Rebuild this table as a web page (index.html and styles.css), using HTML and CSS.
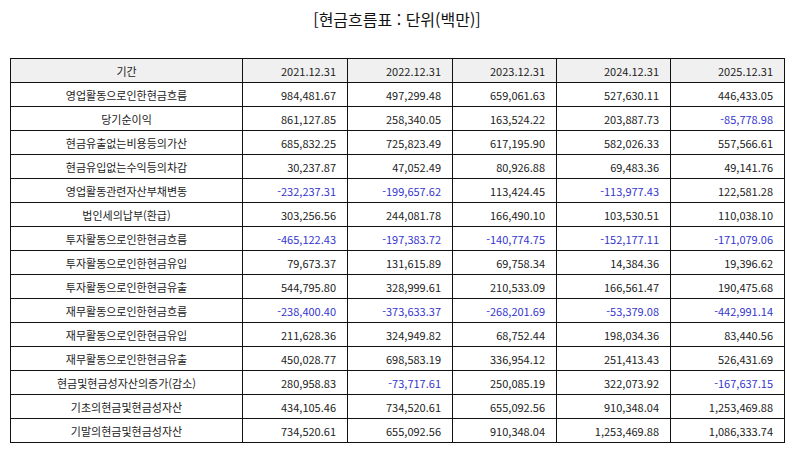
FILE: index.html
```html
<!DOCTYPE html>
<html lang="ko">
<head>
<meta charset="utf-8">
<link rel="stylesheet" href="styles.css">
</head>
<body>
<div class="page">
  <h1 class="title">[현금흐름표 : 단위(백만)]</h1>
  <table class="cf">
    <colgroup>
      <col class="c-label"><col class="c-a"><col class="c-a"><col class="c-b"><col class="c-c"><col class="c-c">
    </colgroup>
    <thead>
      <tr><th class="lbl">기간</th><th>2021.12.31</th><th>2022.12.31</th><th>2023.12.31</th><th>2024.12.31</th><th>2025.12.31</th></tr>
    </thead>
    <tbody>
      <tr><td class="lbl">영업활동으로인한현금흐름</td><td>984,481.67</td><td>497,299.48</td><td>659,061.63</td><td>527,630.11</td><td>446,433.05</td></tr>
      <tr><td class="lbl">당기순이익</td><td>861,127.85</td><td>258,340.05</td><td>163,524.22</td><td>203,887.73</td><td class="neg">-85,778.98</td></tr>
      <tr><td class="lbl">현금유출없는비용등의가산</td><td>685,832.25</td><td>725,823.49</td><td>617,195.90</td><td>582,026.33</td><td>557,566.61</td></tr>
      <tr><td class="lbl">현금유입없는수익등의차감</td><td>30,237.87</td><td>47,052.49</td><td>80,926.88</td><td>69,483.36</td><td>49,141.76</td></tr>
      <tr><td class="lbl">영업활동관련자산부채변동</td><td class="neg">-232,237.31</td><td class="neg">-199,657.62</td><td>113,424.45</td><td class="neg">-113,977.43</td><td>122,581.28</td></tr>
      <tr><td class="lbl">법인세의납부(환급)</td><td>303,256.56</td><td>244,081.78</td><td>166,490.10</td><td>103,530.51</td><td>110,038.10</td></tr>
      <tr><td class="lbl">투자활동으로인한현금흐름</td><td class="neg">-465,122.43</td><td class="neg">-197,383.72</td><td class="neg">-140,774.75</td><td class="neg">-152,177.11</td><td class="neg">-171,079.06</td></tr>
      <tr><td class="lbl">투자활동으로인한현금유입</td><td>79,673.37</td><td>131,615.89</td><td>69,758.34</td><td>14,384.36</td><td>19,396.62</td></tr>
      <tr><td class="lbl">투자활동으로인한현금유출</td><td>544,795.80</td><td>328,999.61</td><td>210,533.09</td><td>166,561.47</td><td>190,475.68</td></tr>
      <tr><td class="lbl">재무활동으로인한현금흐름</td><td class="neg">-238,400.40</td><td class="neg">-373,633.37</td><td class="neg">-268,201.69</td><td class="neg">-53,379.08</td><td class="neg">-442,991.14</td></tr>
      <tr><td class="lbl">재무활동으로인한현금유입</td><td>211,628.36</td><td>324,949.82</td><td>68,752.44</td><td>198,034.36</td><td>83,440.56</td></tr>
      <tr><td class="lbl">재무활동으로인한현금유출</td><td>450,028.77</td><td>698,583.19</td><td>336,954.12</td><td>251,413.43</td><td>526,431.69</td></tr>
      <tr><td class="lbl">현금및현금성자산의증가(감소)</td><td>280,958.83</td><td class="neg">-73,717.61</td><td>250,085.19</td><td>322,073.92</td><td class="neg">-167,637.15</td></tr>
      <tr><td class="lbl">기초의현금및현금성자산</td><td>434,105.46</td><td>734,520.61</td><td>655,092.56</td><td>910,348.04</td><td>1,253,469.88</td></tr>
      <tr><td class="lbl">기말의현금및현금성자산</td><td>734,520.61</td><td>655,092.56</td><td>910,348.04</td><td>1,253,469.88</td><td>1,086,333.74</td></tr>
    </tbody>
  </table>
</div>
</body>
</html>
```
FILE: styles.css
```css
html, body {
  margin: 0;
  padding: 0;
  background: #ffffff;
}
.page {
  padding: 9px 10px 0 10px;
  font-family: "Noto Sans CJK KR", "Noto Sans", sans-serif;
  color: #222222;
}
.title {
  margin: 0 0 29px 0;
  font-size: 16px;
  line-height: 20px;
  font-weight: normal;
  text-align: center;
  color: #111111;
}
.cf {
  width: 774px;
  border-collapse: collapse;
  table-layout: fixed;
  font-size: 11px;
}
.c-label { width: 232px; }
.c-a { width: 105px; }
.c-b { width: 104px; }
.c-c { width: 114px; }
.cf th, .cf td {
  border: 1px solid #111111;
  height: 23px;
  padding: 0 11px 0 4px;
  text-align: right;
  font-weight: normal;
  white-space: nowrap;
  line-height: 14px;
}
.cf thead th {
  background: #f0f0f0;
}
.cf .lbl {
  text-align: center;
  padding: 0 4px;
}
.cf .neg {
  color: #3535d0;
}
```
